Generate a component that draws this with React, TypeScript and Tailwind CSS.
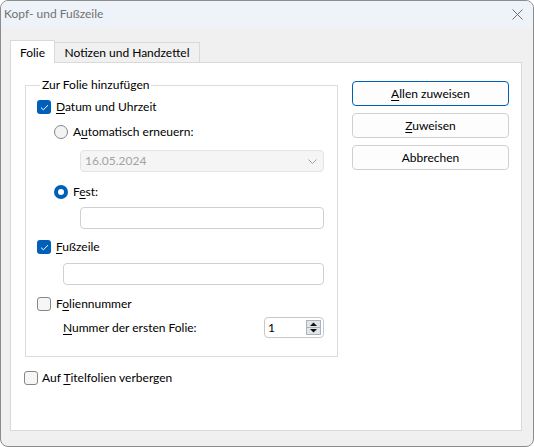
import React from "react"

const font = { fontFamily: '"Segoe UI", Lato, "Noto Sans", sans-serif' }

function CheckBox({ checked }: { checked?: boolean }) {
  if (checked) {
    return (
      <span className="flex h-[14px] w-[14px] shrink-0 items-center justify-center rounded-[3px] bg-[#005fb8]">
        <svg width="9" height="7" viewBox="0 0 9 7" fill="none">
          <path d="M1 3.6 L3.3 5.8 L8 1.2" stroke="white" strokeWidth="1" />
        </svg>
      </span>
    )
  }
  return <span className="h-[14px] w-[14px] shrink-0 rounded-[3px] border border-[#868686] bg-[#f6f6f6]" />
}

function Radio({ selected }: { selected?: boolean }) {
  if (selected) {
    return (
      <span className="flex h-[14px] w-[14px] shrink-0 items-center justify-center rounded-full bg-[#005fb8]">
        <span className="h-[6px] w-[6px] rounded-full bg-white" />
      </span>
    )
  }
  return <span className="h-[14px] w-[14px] shrink-0 rounded-full border border-[#868686] bg-[#f3f3f3]" />
}

function Button({ children, primary }: { children: React.ReactNode; primary?: boolean }) {
  return (
    <div
      className={
        "flex h-[25px] w-[157px] items-center justify-center rounded-[4px] bg-[#fdfdfd] text-black " +
        (primary ? "border border-[#005fb8]" : "border border-[#d0d0d0]")
      }
    >
      {children}
    </div>
  )
}

export default function App() {
  return (
    <div style={font} className="h-[447px] w-[534px] overflow-hidden rounded-[8px] border border-[#8c8c8c] bg-[#f0f0f0] text-[12px] leading-[16px] text-black">
      <div className="flex h-[26px] items-center justify-between bg-[#eef2f9] pl-[3px] pr-[10px]">
        <span className="text-[#727272]">Kopf- und Fußzeile</span>
        <svg width="11" height="11" viewBox="0 0 11 11">
          <path d="M0.5 0.5 L10.5 10.5 M10.5 0.5 L0.5 10.5" stroke="#707070" strokeWidth="1" />
        </svg>
      </div>

      <div className="pl-[9px] pt-[13px]">
        <div className="flex items-end">
          <div className="relative z-10 -mb-px flex h-[23px] w-[45px] items-center justify-center border border-b-0 border-[#d9d9d9] bg-white pt-[1px]">
            Folie
          </div>
          <div className="flex h-[20px] w-[145px] items-center justify-center border border-b-0 border-l-0 border-[#d9d9d9] bg-[#f0f0f0]">
            Notizen und Handzettel
          </div>
        </div>

        <div className="flex h-[369px] w-[512px] border border-[#d9d9d9] bg-white pl-[13px] pt-[14px]">
          <div className="flex flex-col">
            <fieldset className="ml-px h-[280px] w-[313px] border border-[#dcdcdc] pb-[18px] pl-[11px] pr-[13px]">
              <legend className="ml-[3px] px-[2px]">Zur Folie hinzufügen</legend>

              <div className="mt-[6px] flex h-[16px] items-center gap-[5px]">
                <CheckBox checked />
                <span>
                  <u className="underline-offset-[2px]">D</u>atum und Uhrzeit
                </span>
              </div>

              <div className="ml-[17px] mt-[9px] flex h-[16px] items-center gap-[5px]">
                <Radio />
                <span>
                  A<u className="underline-offset-[2px]">u</u>tomatisch erneuern:
                </span>
              </div>

              <div className="ml-[43px] mt-[10px] flex h-[22px] items-center justify-between rounded-[4px] border border-[#e3e3e3] bg-[#f5f5f5] pl-[4px] pr-[6px] text-[#a3a3a3]">
                <span>16.05.2024</span>
                <svg width="9" height="5" viewBox="0 0 9 5">
                  <path d="M0.5 0.5 L4.5 4.5 L8.5 0.5" stroke="#a0a0a0" strokeWidth="1" fill="none" />
                </svg>
              </div>

              <div className="ml-[17px] mt-[12px] flex h-[16px] items-center gap-[5px]">
                <Radio selected />
                <span>
                  F<u className="underline-offset-[2px]">e</u>st:
                </span>
              </div>

              <div className="ml-[43px] mt-[7px] h-[22px] rounded-[4px] border border-[#d0d0d0] bg-white" />

              <div className="mt-[10px] flex h-[16px] items-center gap-[5px]">
                <CheckBox checked />
                <span>
                  <u className="underline-offset-[2px]">F</u>ußzeile
                </span>
              </div>

              <div className="ml-[26px] mt-[8px] h-[22px] rounded-[4px] border border-[#d0d0d0] bg-white" />

              <div className="mt-[11px] flex h-[16px] items-center gap-[5px]">
                <CheckBox />
                <span>
                  F<u className="underline-offset-[2px]">o</u>liennummer
                </span>
              </div>

              <div className="ml-[26px] mt-[5px] flex h-[21px] items-center justify-between">
                <span>
                  <u className="underline-offset-[2px]">N</u>ummer der ersten Folie:
                </span>
                <div className="flex h-[21px] w-[60px] items-center justify-between rounded-[4px] border border-[#c8c8c8] bg-white pl-[3px] pr-[2px]">
                  <span>1</span>
                  <svg width="15" height="15" viewBox="0 0 15 15">
                    <rect x="0.5" y="0.5" width="14" height="14" fill="#e4e4e4" stroke="#a8b4c4" />
                    <line x1="1" y1="7.5" x2="14" y2="7.5" stroke="#a8b4c4" />
                    <path d="M4 6 L7.5 2.5 L11 6 Z" fill="#111" />
                    <path d="M4 9 L7.5 12.5 L11 9 Z" fill="#111" />
                  </svg>
                </div>
              </div>
            </fieldset>

            <div className="mt-[13px] flex h-[16px] items-center gap-[4px]">
              <CheckBox />
              <span>
                Auf <u className="underline-offset-[2px]">T</u>itelfolien verbergen
              </span>
            </div>
          </div>

          <div className="ml-[14px] mt-[4px] flex flex-col gap-[7px]">
            <Button primary>
              <span>
                <u className="underline-offset-[2px]">A</u>llen zuweisen
              </span>
            </Button>
            <Button>
              <span>
                <u className="underline-offset-[2px]">Z</u>uweisen
              </span>
            </Button>
            <Button>Abbrechen</Button>
          </div>
        </div>
      </div>
    </div>
  )
}
